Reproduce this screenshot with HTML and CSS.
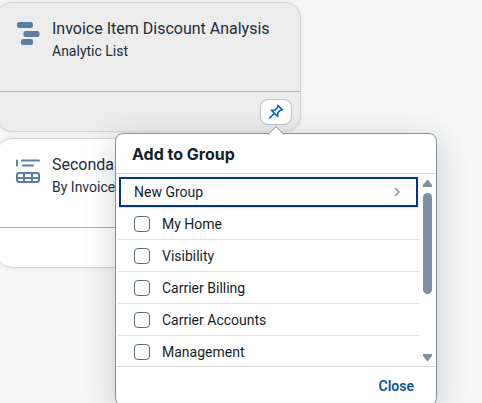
FILE: index.html
```html
<!DOCTYPE html>
<html lang="en">
<head>
<meta charset="utf-8">
<title>Add to Group</title>
<link rel="stylesheet" href="styles.css">
</head>
<body>
<main class="results">
  <article class="card card-active">
    <div class="card-head">
      <svg class="card-icon" viewBox="0 0 24 24" aria-hidden="true">
        <rect x="1" y="0" width="16" height="6" rx="2"/>
        <rect x="7.500" y="9" width="16" height="6" rx="2"/>
        <rect x="5" y="17" width="12" height="6" rx="2"/>
      </svg>
      <div>
        <h2 class="card-title">Invoice Item Discount Analysis</h2>
        <p class="card-subtitle">Analytic List</p>
      </div>
    </div>
    <div class="card-foot">
      <button class="pin" type="button" aria-label="Add to group">
        <svg viewBox="0 0 16 16" aria-hidden="true">
          <path d="M9.8 1.4 14.4 5.8 12.2 6.2 9.9 8.8 9.6 12.4 3.3 6.3 7 6 9.5 3.5ZM6.2 9.5 1.6 14"/>
        </svg>
      </button>
    </div>
    <section class="popover" role="dialog" aria-labelledby="popover-title">
      <svg class="arrow" viewBox="0 0 16 9" aria-hidden="true"><path d="M0 8.5 L8 .7 L16 8.5"/></svg>
      <h1 class="popover-title" id="popover-title">Add to Group</h1>
      <div class="popover-body">
        <div class="groups">
          <button class="new-group" type="button">New Group
            <svg viewBox="0 0 8 10" aria-hidden="true"><path d="M2 1 6 5 2 9"/></svg>
          </button>
          <label class="group"><input type="checkbox">My Home</label>
          <label class="group"><input type="checkbox">Visibility</label>
          <label class="group"><input type="checkbox">Carrier Billing</label>
          <label class="group"><input type="checkbox">Carrier Accounts</label>
          <label class="group"><input type="checkbox">Management</label>
        </div>
        <div class="scrollbar" aria-hidden="true">
          <svg viewBox="0 0 9 7"><path d="M4 0H5L9 5V7H0V5Z"/></svg>
          <div class="track"><div class="thumb"></div></div>
          <svg viewBox="0 0 9 7"><path d="M0 0H9V2L5 7H4L0 2Z"/></svg>
        </div>
      </div>
      <div class="popover-foot"><button class="close" type="button">Close</button></div>
    </section>
  </article>
  <article class="card">
    <div class="card-head">
      <svg class="card-icon" viewBox="0 0 24 24" aria-hidden="true">
        <path class="line" d="M1 2.500V7.500M6 2.500H23M7 7.500H17"/>
        <path fill-rule="evenodd" d="M3 14H21Q24 14 24 17V22Q24 25 21 25H3Q0 25 0 22V17Q0 14 3 14ZM3 16Q2 16 2 17V19H7V16ZM9 16V19H15V16ZM17 16V19H22V17Q22 16 21 16ZM2 21V22Q2 23 3 23H7V21ZM9 21V23H15V21ZM17 21V23H21Q22 23 22 22V21Z"/>
      </svg>
      <div>
        <h2 class="card-title">Secondar</h2>
        <p class="card-subtitle">By Invoice</p>
      </div>
    </div>
    <div class="card-foot"></div>
  </article>
</main>
</body>
</html>
```
FILE: styles.css
```css
* { box-sizing: border-box; }
body {
  margin: 0;
  min-height: 100vh;
  overflow: hidden;
  background: #f7f7f7;
  color: #1d2d3e;
  font: 14px/20px Roboto, "Liberation Sans", sans-serif;
}
button { font: inherit; cursor: pointer; }
h1, h2, p { margin: 0; font-weight: 400; }

.results {
  display: flex;
  flex-direction: column;
  gap: 6px;
  max-width: 305px;
  margin: 2px 0 0 -4px;
}
.card {
  position: relative;
  border: 1px solid #d3d7da;
  border-radius: 16px;
  background: #fff;
  box-shadow: 0 0 4px rgba(34, 53, 72, .1);
}
.card-active { z-index: 1; background: #ececec; }
.card-head {
  display: flex;
  gap: 12px;
  height: 89px;
  padding: 14px 16px 0 19px;
  border-bottom: 1px solid #a8b3bd;
}
.card-icon { width: 24px; height: 24px; margin-top: 5px; overflow: visible; fill: #5b7fa4; }
.card-icon .line { fill: none; stroke: #5b7fa4; stroke-width: 2; stroke-linecap: round; }
.card-title { font-size: 16px; line-height: 24px; white-space: nowrap; }
.card-subtitle { line-height: 20px; }
.card-foot {
  display: flex;
  justify-content: flex-end;
  align-items: center;
  height: 39px;
  padding-right: 8px;
}
.pin {
  display: grid;
  place-items: center;
  width: 32px;
  height: 26px;
  padding: 0;
  border: 1px solid #bcc3ca;
  border-radius: 8px;
  background: #fff;
}
.pin svg { width: 16px; height: 16px; fill: none; stroke: #0064d9; stroke-width: 1.6; stroke-linejoin: round; stroke-linecap: round; }

.popover {
  position: absolute;
  top: 130px;
  left: 118px;
  width: 322px;
  border: 1px solid #8391a0;
  border-radius: 8px;
  background: #fff;
  box-shadow: 0 8px 32px rgba(34, 53, 72, .24);
}
.arrow {
  position: absolute;
  top: -8px;
  left: 152px;
  width: 16px;
  height: 9px;
  fill: #fff;
  stroke: #8391a0;
}
.popover-title {
  height: 40px;
  padding: 0 16px;
  border-bottom: 1px solid #d9d9d9;
  font-family: Inter, Roboto, sans-serif;
  font-size: 16px;
  font-weight: 700;
  line-height: 40px;
  color: #131e29;
}
.popover-body { display: flex; height: 192px; padding: 2px 4px 0 2px; overflow: hidden; }
.groups { flex: 1; color: #131e29; }
.new-group, .group {
  display: flex;
  align-items: center;
  width: 100%;
  height: 32px;
  padding: 0 16px;
  border: 0;
  border-bottom: 1px solid #e5e5e5;
  background: none;
  color: inherit;
}
.new-group {
  justify-content: space-between;
  padding-right: 18px;
  outline: 2px solid #0032a5;
  outline-offset: -3px;
}
.new-group svg { width: 8px; height: 10px; fill: none; stroke: #758ca4; stroke-width: 1.4; }
.group { gap: 12px; }
.group:last-child { border-bottom: 0; }
.group input {
  appearance: none;
  width: 16px;
  height: 16px;
  margin: 0;
  border: 1px solid #556b82;
  border-radius: 4px;
  background: #fff;
}
.scrollbar {
  display: flex;
  flex-direction: column;
  gap: 6px;
  width: 9px;
  margin-left: 4px;
  padding: 4px 0 5px;
}
.scrollbar svg { width: 9px; height: 7px; fill: #7b91a8; }
.track { flex: 1; }
.thumb { height: 101px; border-radius: 5px; background: #7b91a8; }
.popover-foot {
  display: flex;
  justify-content: flex-end;
  align-items: center;
  height: 39px;
  padding-right: 22px;
  border-top: 1px solid #d9d9d9;
}
.close { padding: 0; border: 0; background: none; color: #0854a0; font-weight: 600; }
```
